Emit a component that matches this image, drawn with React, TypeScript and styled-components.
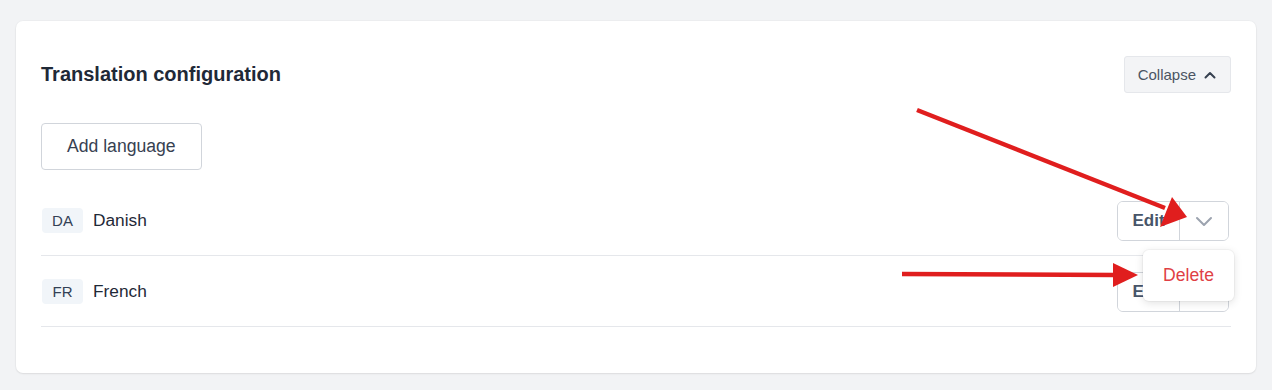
import React from "react";
import styled, { createGlobalStyle } from "styled-components";

const Global = createGlobalStyle`
  html, body { margin: 0; padding: 0; background: #f2f3f5; }
  body { font-family: "Liberation Sans", Arial, sans-serif; }
  * { box-sizing: border-box; }
`;

const Page = styled.div`
  position: relative;
  padding: 21px 16px 18px 16px;
  width: 1272px;
  height: 390px;
`;

const Card = styled.section`
  background: #ffffff;
  border-radius: 7px;
  box-shadow: 0 1px 2px rgba(0, 0, 0, 0.08), 0 0 0 1px rgba(0, 0, 0, 0.02);
  padding: 35px 25px 46px 25px;
  display: flex;
  flex-direction: column;
`;

const Header = styled.div`
  display: flex;
  align-items: center;
  justify-content: space-between;
  height: 37px;
`;

const Title = styled.h2`
  margin: 0;
  font-size: 20px;
  font-weight: 700;
  color: #1f2937;
`;

const CollapseButton = styled.button`
  display: flex;
  align-items: center;
  gap: 7px;
  height: 37px;
  padding: 0 13px 0 13px;
  background: #f3f4f6;
  border: 1px solid #e5e7eb;
  border-radius: 3px;
  font-family: inherit;
  font-size: 15px;
  color: #4b5563;
`;

const AddButton = styled.button`
  align-self: flex-start;
  margin-top: 30px;
  height: 47px;
  padding: 0 25px;
  background: #fff;
  border: 1px solid #d1d5db;
  border-radius: 4px;
  font-family: inherit;
  font-size: 17.6px;
  color: #374151;
`;

const List = styled.div`
  margin-top: 15px;
  display: flex;
  flex-direction: column;
`;

const Row = styled.div`
  position: relative;
  display: flex;
  align-items: center;
  justify-content: space-between;
  padding: 16px 2px 14px 1px;
  border-bottom: 1px solid #e5e7eb;
`;

const LangInfo = styled.div`
  display: flex;
  align-items: center;
  gap: 10px;
  margin-top: -2px;
`;

const Badge = styled.span`
  display: inline-flex;
  align-items: center;
  justify-content: center;
  width: 41px;
  height: 25px;
  border-radius: 4px;
  background: #f1f5f9;
  color: #334155;
  font-size: 15px;
`;

const LangName = styled.span`
  font-size: 17.3px;
  color: #1f2937;
`;

const ButtonGroup = styled.div`
  display: flex;
  height: 40px;
  border: 1px solid #d1d5db;
  border-radius: 6px;
  overflow: hidden;
  background: #fff;
`;

const EditButton = styled.button`
  width: 62px;
  border: none;
  border-right: 1px solid #d1d5db;
  background: #fff;
  font-family: inherit;
  font-size: 17px;
  font-weight: 700;
  color: #475569;
`;

const ToggleButton = styled.button`
  width: 48px;
  border: none;
  background: #fff;
  display: flex;
  align-items: center;
  justify-content: center;
  color: #9ca3af;
  padding: 0;
`;

const Menu = styled.div`
  position: absolute;
  right: -3px;
  top: 65px;
  width: 91px;
  height: 51px;
  background: #fff;
  border-radius: 6px;
  box-shadow: 0 2px 8px rgba(0, 0, 0, 0.12), 0 0 0 1px rgba(0, 0, 0, 0.03);
  display: flex;
  align-items: center;
  justify-content: center;
  z-index: 2;
`;

const MenuItem = styled.span`
  color: #df3f45;
  font-size: 17.6px;
`;

const Annotations = styled.svg`
  position: absolute;
  left: 0;
  top: 0;
  pointer-events: none;
  z-index: 3;
`;

const ChevronUp = () => (
  <svg width="14" height="14" viewBox="0 0 14 14" fill="none">
    <path d="M2.5 9.5 L7 5 L11.5 9.5" stroke="#374151" strokeWidth="2" strokeLinecap="round" strokeLinejoin="round" />
  </svg>
);

const ChevronDown = () => (
  <svg width="20" height="14" viewBox="0 0 20 14" fill="none">
    <path d="M3 4 L10 11 L17 4" stroke="#9ca3af" strokeWidth="2" strokeLinecap="round" strokeLinejoin="round" />
  </svg>
);

const languages = [
  { code: "DA", name: "Danish", open: true },
  { code: "FR", name: "French", open: false },
];

export default function App() {
  return (
    <Page>
      <Global />
      <Card>
        <Header>
          <Title>Translation configuration</Title>
          <CollapseButton>
            Collapse <ChevronUp />
          </CollapseButton>
        </Header>
        <AddButton>Add language</AddButton>
        <List>
          {languages.map((l) => (
            <Row key={l.code}>
              <LangInfo>
                <Badge>{l.code}</Badge>
                <LangName>{l.name}</LangName>
              </LangInfo>
              <ButtonGroup>
                <EditButton>Edit</EditButton>
                <ToggleButton>
                  <ChevronDown />
                </ToggleButton>
              </ButtonGroup>
              {l.open && (
                <Menu>
                  <MenuItem>Delete</MenuItem>
                </Menu>
              )}
            </Row>
          ))}
        </List>
      </Card>
      <Annotations width="1272" height="390" viewBox="0 0 1272 390">
        <line x1="917" y1="110" x2="1165" y2="208" stroke="#e01e1e" strokeWidth="4.5" />
        <polygon points="1187,217 1160,227 1172,197" fill="#e01e1e" />
        <line x1="902" y1="274" x2="1115" y2="275" stroke="#e01e1e" strokeWidth="4.5" />
        <polygon points="1138,275 1113,263 1113,287" fill="#e01e1e" />
      </Annotations>
    </Page>
  );
}
